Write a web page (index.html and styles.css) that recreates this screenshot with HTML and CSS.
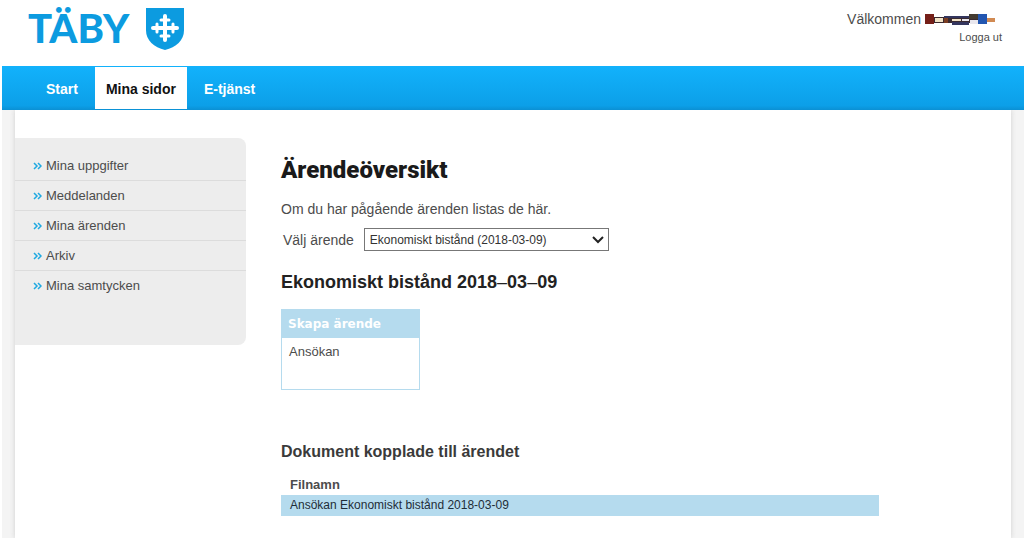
FILE: index.html
```html
<!DOCTYPE html>
<html lang="sv">

<head>
  <meta charset="UTF-8">
  <meta name="viewport" content="width=device-width, initial-scale=1.0">
  <title>Ärendeöversikt</title>
  <link rel="stylesheet" href="styles.css">
</head>

<body>
  <header class="header">
    <a class="logo" href="#">
      <span>TÄBY</span>
      <svg width="40" height="44" viewBox="0 0 40 44" aria-hidden="true">
        <path fill="#0c9be0" d="M1 1h38v22c0 11-8 17-19 20C9 40 1 34 1 23z" />
        <g stroke="#fff" stroke-width="4" stroke-linecap="round">
          <path d="M20 9v24M8 21h24" />
          <path stroke-width="3" d="M16 13h8M16 29h8M12 17v8M28 17v8" />
        </g>
      </svg>
    </a>
    <div class="user">
      <div class="welcome">Välkommen
        <svg width="71" height="12" viewBox="0 0 71 12" aria-hidden="true">
          <path fill="#3a2a30" d="M8 4h46v6H8z" />
          <path fill="#752019" d="M0 1h9v10H0z" />
          <path fill="#f2e3c6" d="M10 5h8v4h-8zM27 6h9v2h-9z" />
          <path fill="#7a3d22" d="M19 5h4v5h-4z" />
          <path fill="#34365e" d="M19 3h26v2H19zM27 9h17v3H27z" />
          <path fill="#e9e7ee" d="M37 6h7v2h-7zM45 7h8v4h-8z" />
          <path fill="#433b30" d="M44 1h9v5h-9z" />
          <path fill="#2256b0" d="M53 1h9v10h-9z" />
          <path fill="#d18a52" d="M62 5h8v4h-8z" />
        </svg>
      </div>
      <a class="logout" href="#">Logga ut</a>
    </div>
  </header>

  <nav class="topnav">
    <a href="#">Start</a>
    <a class="active" href="#">Mina sidor</a>
    <a href="#">E-tjänst</a>
  </nav>

  <div class="page">
    <div class="panel">
      <aside class="sidebar">
        <ul>
          <li><a href="#"><svg class="arrows" viewBox="0 0 9 8"><path d="M1 1l3 3-3 3M5 1l3 3-3 3" /></svg>Mina uppgifter</a></li>
          <li><a href="#"><svg class="arrows" viewBox="0 0 9 8"><path d="M1 1l3 3-3 3M5 1l3 3-3 3" /></svg>Meddelanden</a></li>
          <li><a href="#"><svg class="arrows" viewBox="0 0 9 8"><path d="M1 1l3 3-3 3M5 1l3 3-3 3" /></svg>Mina ärenden</a></li>
          <li><a href="#"><svg class="arrows" viewBox="0 0 9 8"><path d="M1 1l3 3-3 3M5 1l3 3-3 3" /></svg>Arkiv</a></li>
          <li><a href="#"><svg class="arrows" viewBox="0 0 9 8"><path d="M1 1l3 3-3 3M5 1l3 3-3 3" /></svg>Mina samtycken</a></li>
        </ul>
      </aside>

      <main class="content">
        <h1>Ärendeöversikt</h1>
        <p class="intro">Om du har pågående ärenden listas de här.</p>
        <div class="choose">
          <label for="arende">Välj ärende</label>
          <div class="select">
            <select id="arende">
              <option>Ekonomiskt bistånd (2018-03-09)</option>
            </select>
            <svg width="12" height="8" viewBox="0 0 12 8" aria-hidden="true">
              <path d="M1 1l5 5 5-5" />
            </svg>
          </div>
        </div>

        <h2>Ekonomiskt bistånd 2018<span>–</span>03<span>–</span>09</h2>
        <section class="box">
          <h3>Skapa ärende</h3>
          <a href="#">Ansökan</a>
        </section>

        <h2 class="docs-title">Dokument kopplade till ärendet</h2>
        <table class="docs">
          <thead>
            <tr><th>Filnamn</th></tr>
          </thead>
          <tbody>
            <tr><td>Ansökan Ekonomiskt bistånd 2018-03-09</td></tr>
          </tbody>
        </table>
      </main>
    </div>
  </div>
</body>

</html>
```
FILE: styles.css
```css
* {
  box-sizing: border-box;
  margin: 0;
  padding: 0;
}

body {
  min-height: 100vh;
  display: flex;
  flex-direction: column;
  padding: 0 0 2px 2px;
  background: #fff;
  color: #4c4c4c;
  font-family: "Liberation Sans", Arial, sans-serif;
  font-size: 13px;
}

a {
  color: inherit;
  text-decoration: none;
}

.header {
  display: flex;
  justify-content: space-between;
  height: 66px;
  padding: 7px 22px 0 26px;
}

.logo {
  display: flex;
  gap: 16px;
  height: 44px;
  color: #0c9be0;
  font-family: Lato, sans-serif;
  font-size: 40px;
  font-weight: 900;
  line-height: 42px;
}

.user {
  padding-top: 2px;
  text-align: right;
}

.welcome {
  display: flex;
  align-items: center;
  gap: 4px;
  padding-right: 6px;
  font-size: 14px;
  line-height: 20px;
}

.logout {
  font-size: 11px;
  line-height: 16px;
}

.topnav {
  display: flex;
  height: 44px;
  padding: 1px 0 1px 32px;
  background: linear-gradient(#12b2fc, #0c9fe8 90%, #0b90d4);
}

.topnav a {
  padding: 0 11px;
  color: #fff;
  font-size: 14px;
  font-weight: bold;
  line-height: 44px;
}

.topnav a:first-child {
  padding: 0 17px 0 12px;
}

.topnav a:last-child {
  padding: 0 17px;
}

.topnav .active {
  background: #fff;
  color: #111;
}

.page {
  flex: 1;
  display: flex;
  overflow: hidden;
  padding: 0 13px;
  background: #f4f4f4;
}

.panel {
  flex: 1;
  display: flex;
  align-items: flex-start;
  gap: 35px;
  padding-top: 28px;
  background: #fff;
  box-shadow: 0 0 5px #cfcfcf;
}

.sidebar {
  width: 231px;
  padding: 13px 0 45px;
  border-radius: 0 8px 8px 0;
  background: #ededed;
}

.sidebar ul {
  list-style: none;
}

.sidebar li {
  border-bottom: 1px solid #dcdcdc;
}

.sidebar li:last-child {
  border-bottom: 0;
}

.sidebar a {
  display: flex;
  align-items: center;
  gap: 4px;
  padding-left: 18px;
  line-height: 29px;
}

.arrows {
  width: 9px;
  height: 8px;
  fill: none;
  stroke: #1ea9e1;
  stroke-width: 1.5;
}

.content {
  flex: 1;
  padding: 16px 132px 22px 0;
}

h1 {
  color: #1a1a1a;
  font-family: Roboto, sans-serif;
  font-size: 24px;
  font-weight: 900;
  line-height: 32px;
}

.intro {
  padding: 12px 0 8px;
  font-size: 14px;
  line-height: 22px;
}

.choose {
  display: flex;
  align-items: center;
  gap: 10px;
  padding-left: 2px;
  font-size: 14px;
}

.select {
  position: relative;
  width: 245px;
}

.select select {
  width: 100%;
  height: 23px;
  padding: 0 5px;
  border: 1px solid #777;
  border-radius: 0;
  appearance: none;
  background: #fff;
  color: #333;
  font-family: inherit;
  font-size: 12px;
}

.select svg {
  position: absolute;
  top: 8px;
  right: 5px;
  fill: none;
  stroke: #222;
  stroke-width: 2;
  pointer-events: none;
}

h2 {
  padding: 20px 0 16px;
  color: #222;
  font-size: 18px;
  line-height: 22px;
}

h2 span {
  font-weight: normal;
}

.box {
  width: 139px;
  height: 81px;
  border: 1px solid #b5dbee;
}

.box h3 {
  padding-left: 6px;
  background: #b5dbee;
  color: #fff;
  font-family: "DejaVu Sans", sans-serif;
  font-size: 12px;
  line-height: 28px;
}

.box a {
  display: block;
  padding-left: 7px;
  line-height: 28px;
}

.docs-title {
  padding: 51px 0 11px;
  color: #3a3a3a;
  font-size: 16px;
}

.docs {
  width: 100%;
  max-width: 598px;
  border-collapse: collapse;
}

.docs th,
.docs td {
  padding-left: 9px;
  text-align: left;
  line-height: 21px;
}

.docs td {
  background: #b5dbee;
  color: #1f2d38;
  font-size: 12px;
}
```
